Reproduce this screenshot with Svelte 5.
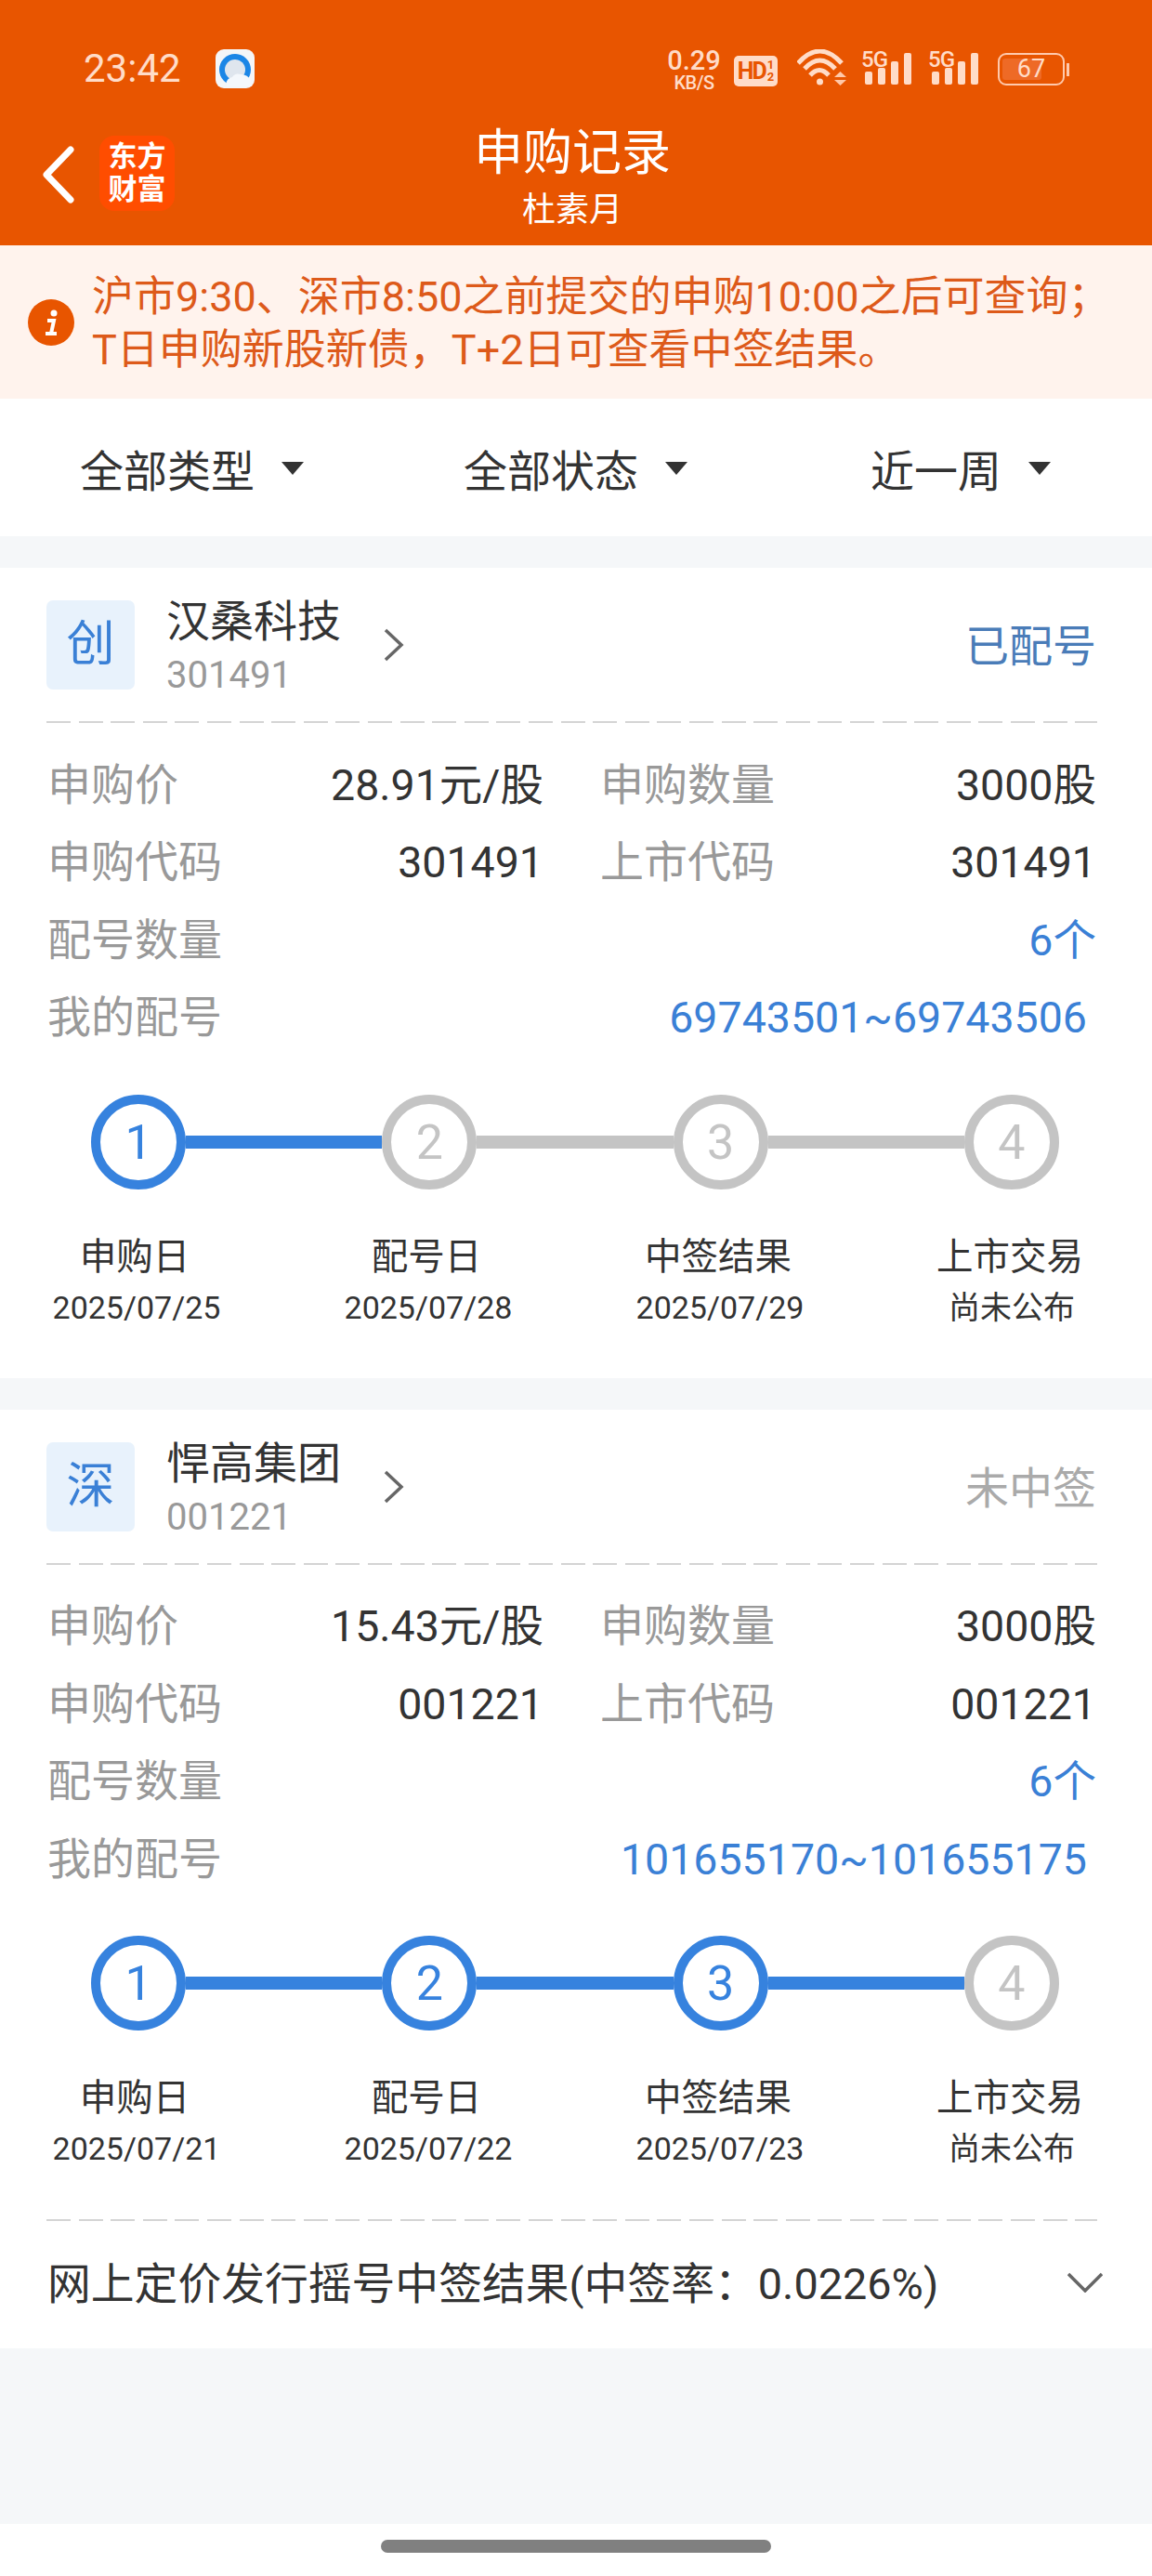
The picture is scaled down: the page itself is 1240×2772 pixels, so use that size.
<script>
  const cards = [
    {
      badge: '创',
      name: '汉桑科技',
      code: '301491',
      status: '已配号',
      statusClass: 'matched',
      price: '28.91元/股',
      numbers: '69743501~69743506',
      done: 1,
      steps: [
        { label: '申购日', date: '2025/07/25' },
        { label: '配号日', date: '2025/07/28' },
        { label: '中签结果', date: '2025/07/29' },
        { label: '上市交易', date: '尚未公布' }
      ]
    },
    {
      badge: '深',
      name: '悍高集团',
      code: '001221',
      status: '未中签',
      statusClass: 'missed',
      price: '15.43元/股',
      numbers: '101655170~101655175',
      done: 3,
      steps: [
        { label: '申购日', date: '2025/07/21' },
        { label: '配号日', date: '2025/07/22' },
        { label: '中签结果', date: '2025/07/23' },
        { label: '上市交易', date: '尚未公布' }
      ],
      footer: '网上定价发行摇号中签结果(中签率：0.0226%)'
    }
  ]

  const filters = ['全部类型', '全部状态', '近一周']
</script>

<div class="page">
  <header>
    <div class="statusbar">
      <span class="time">23:42</span>
      <svg class="qq" width="42" height="42" viewBox="0 0 42 42">
        <rect width="42" height="42" rx="9" fill="#f4f6f8" />
        <circle cx="21" cy="22" r="17" fill="#1b86e6" />
        <circle cx="21" cy="22" r="11" fill="#dfe6ee" />
        <path d="M12 40q-2-8 6-10q3-5 9-3q8 0 11 7v6z" fill="#f4f8fc" />
      </svg>
      <span class="spacer"></span>
      <span class="speed"><b>0.29</b><i>KB/S</i></span>
      <span class="hd">HD<small>1<br />2</small></span>
      <svg class="wifi" width="54" height="40" viewBox="0 0 54 40">
        <path d="M1 15q23.500-26 47 0M8 21q16.500-18 33 0M14 28q10-11 20 0" fill="none" stroke="#ffdcc8" stroke-width="5" />
        <circle cx="24.500" cy="35" r="3.500" fill="#ffdcc8" />
        <path d="M40 30l6.500-6l6.500 6zM40 33l6.500 6l6.500-6z" fill="#ffc8a8" />
      </svg>
      {#each [0, 1] as s}
        <span class="signal">
          <span class="fiveg">5G</span>
          <i class="b1"></i><i class="b2"></i><i class="b3"></i><i class="b4"></i>
        </span>
      {/each}
      <span class="battery">
        <span class="level"></span>
        <span class="pct">67</span>
      </span>
      <span class="nub"></span>
    </div>
    <div class="nav">
      <svg class="back" width="36" height="62" viewBox="0 0 36 62">
        <path d="M31 4L5 31l26 27" fill="none" stroke="#fff" stroke-width="7" stroke-linecap="round" stroke-linejoin="round" />
      </svg>
      <div class="logo">东方<br />财富</div>
      <div class="title">
        <div class="main">申购记录</div>
        <div class="sub">杜素月</div>
      </div>
    </div>
  </header>

  <div class="notice">
    <svg class="info" width="50" height="50" viewBox="0 0 50 50">
      <circle cx="25" cy="25" r="25" fill="#e85500" />
      <circle cx="28" cy="15" r="3.500" fill="#fff" />
      <path d="M21 23h7l-3 14M19 37h12" fill="none" stroke="#fff" stroke-width="4" />
    </svg>
    <p>沪市9:30、深市8:50之前提交的申购10:00之后可查询；<br />T日申购新股新债，T+2日可查看中签结果。</p>
  </div>

  <div class="filters">
    {#each filters as f}
      <div class="filter">{f}<span class="caret"></span></div>
    {/each}
  </div>

  {#each cards as card}
    <section class="card">
      <div class="head">
        <div class="badge">{card.badge}</div>
        <div class="names">
          <div class="name">{card.name}</div>
          <div class="code">{card.code}</div>
        </div>
        <svg class="arrow" width="22" height="36" viewBox="0 0 22 36">
          <path d="M2 2l17 16L2 34" fill="none" stroke="#666" stroke-width="3.5" />
        </svg>
        <div class="status {card.statusClass}">{card.status}</div>
      </div>
      <div class="dash"></div>
      <div class="rows">
        <div class="row half">
          <div class="pair"><span class="label">申购价</span><span class="value">{card.price}</span></div>
          <div class="pair"><span class="label">申购数量</span><span class="value">3000股</span></div>
        </div>
        <div class="row half">
          <div class="pair"><span class="label">申购代码</span><span class="value">{card.code}</span></div>
          <div class="pair"><span class="label">上市代码</span><span class="value">{card.code}</span></div>
        </div>
        <div class="row">
          <span class="label">配号数量</span><span class="value blue">6个</span>
        </div>
        <div class="row">
          <span class="label">我的配号</span><span class="value blue nums">{card.numbers}</span>
        </div>
      </div>
      <div class="track">
        {#each card.steps as step, i}
          <div class="dot" class:on={i < card.done}>{i + 1}</div>
          {#if i < 3}
            <div class="line" class:on={i < card.done}></div>
          {/if}
        {/each}
      </div>
      <div class="labels">
        {#each card.steps as step}
          <div class="step">
            <div class="step-label">{step.label}</div>
            <div class="step-date">{step.date}</div>
          </div>
        {/each}
      </div>
      {#if card.footer}
        <div class="dash"></div>
        <div class="footer">
          <span>{card.footer}</span>
          <svg width="38" height="22" viewBox="0 0 38 22">
            <path d="M1 2l18 18L37 2" fill="none" stroke="#666" stroke-width="3.5" />
          </svg>
        </div>
      {/if}
    </section>
  {/each}

  <div class="rest"></div>
  <div class="home"><span></span></div>
</div>

<style>
  :global(body) {
    margin: 0;
    background: #fff;
  }

  .page {
    width: 1240px;
    height: 2772px;
    overflow: hidden;
    background: #f5f7f9;
    font-family: Roboto, 'Noto Sans CJK SC', sans-serif;
    color: #333;
  }

  header {
    height: 264px;
    background: #e85500;
    color: #fff;
  }

  .statusbar {
    height: 146px;
    box-sizing: border-box;
    padding: 53px 89px 0 90px;
    display: flex;
    align-items: flex-start;
    color: #ffdcc8;
  }

  .time {
    font-size: 42px;
    line-height: 42px;
    margin-right: 37px;
  }

  .spacer {
    flex: 1;
  }

  .speed {
    display: flex;
    flex-direction: column;
    align-items: center;
    width: 56px;
    margin-right: 15px;
  }

  .speed b {
    font-size: 29px;
    line-height: 24px;
    font-weight: 500;
  }

  .speed i {
    font-size: 20px;
    line-height: 18px;
    margin-top: 3px;
    font-style: normal;
    font-weight: 500;
    letter-spacing: -0.5px;
  }

  .hd {
    width: 47px;
    height: 33px;
    margin: 7px 21px 0 0;
    border-radius: 5px;
    background: #ffdcc8;
    color: #e85500;
    font-size: 25px;
    font-weight: 700;
    line-height: 33px;
    letter-spacing: -2px;
    display: flex;
    justify-content: center;
  }

  .hd small {
    font-size: 13px;
    line-height: 13px;
    letter-spacing: 0;
    margin-left: 2px;
    padding-top: 3px;
    text-align: center;
  }

  .wifi {
    margin-right: 15px;
  }

  .signal {
    width: 56px;
    height: 38px;
    margin-right: 16px;
    box-sizing: border-box;
    padding-left: 4px;
    position: relative;
    display: flex;
    align-items: flex-end;
    gap: 6px;
  }

  .fiveg {
    position: absolute;
    left: 0;
    top: -3px;
    font-size: 24px;
    line-height: 28px;
    font-weight: 500;
    letter-spacing: -1px;
  }

  .signal i {
    width: 8px;
    background: #ffdcc8;
    border-radius: 2px;
    flex: none;
  }

  .b1 {
    height: 14px;
  }

  .b2 {
    height: 18px;
  }

  .b3 {
    height: 25px;
  }

  .b4 {
    height: 34px;
  }

  .battery {
    width: 72px;
    height: 35px;
    margin: 4px 0 0 3px;
    box-sizing: border-box;
    border: 2px solid #ffc9ac;
    border-radius: 9px;
    position: relative;
    font-size: 27px;
    line-height: 31px;
    text-align: center;
  }

  .level {
    position: absolute;
    left: 3px;
    top: 4px;
    width: 42px;
    height: 23px;
    background: #ee6a26;
    border-radius: 3px;
  }

  .pct {
    position: relative;
  }

  .nub {
    width: 3px;
    height: 14px;
    margin: 15px 0 0 2px;
    background: #ffc9ac;
  }

  .nav {
    height: 118px;
    position: relative;
    display: flex;
    align-items: flex-start;
  }

  .back {
    margin: 11px 0 0 45px;
  }

  .logo {
    width: 81px;
    height: 81px;
    margin: 0 0 0 26px;
    border-radius: 16px;
    background: #ff4d00;
    font-size: 31px;
    line-height: 35px;
    font-weight: 700;
    text-align: center;
    padding-top: 5px;
    box-sizing: border-box;
  }

  .title {
    position: absolute;
    left: 0;
    right: 8px;
    top: -11px;
    text-align: center;
  }

  .main {
    font-size: 53px;
    line-height: 60px;
  }

  .sub {
    font-size: 36px;
    line-height: 62px;
  }

  .notice {
    height: 165px;
    box-sizing: border-box;
    padding: 0 0 0 30px;
    background: #fff3ed;
    display: flex;
    align-items: center;
    color: #dd5a1a;
  }

  .info {
    margin: 0 19px 0 0;
    flex: none;
  }

  .notice p {
    margin: 2px 0 0;
    font-size: 45px;
    line-height: 57px;
    white-space: nowrap;
  }

  .filters {
    height: 148px;
    background: #fff;
    display: flex;
    align-items: center;
    font-size: 47px;
    padding-left: 86px;
  }

  .filter {
    display: flex;
    align-items: center;
  }

  .filter:nth-child(1) {
    width: 413px;
  }

  .filter:nth-child(2) {
    width: 438px;
  }

  .caret {
    margin: 2px 0 0 29px;
    border-left: 12px solid transparent;
    border-right: 12px solid transparent;
    border-top: 14px solid #333;
  }

  .card {
    margin-top: 34px;
    background: #fff;
  }

  .head {
    height: 165px;
    box-sizing: border-box;
    padding: 35px 60px 0 50px;
    display: flex;
    align-items: flex-start;
  }

  .badge {
    width: 95px;
    height: 96px;
    background: #e8f2fc;
    border-radius: 7px;
    color: #3a80d6;
    font-size: 52px;
    line-height: 96px;
    text-align: center;
    flex: none;
  }

  .names {
    margin-left: 34px;
  }

  .name {
    font-size: 47px;
    line-height: 54px;
    margin-top: -4px;
  }

  .code {
    font-size: 40px;
    line-height: 46px;
    margin-top: 8px;
    color: #999;
  }

  .arrow {
    margin: 30px 0 0 46px;
  }

  .status {
    margin: 23px 0 0 auto;
    font-size: 47px;
    line-height: 54px;
  }

  .matched {
    color: #4a7cb8;
  }

  .missed {
    color: #aaa;
  }

  .dash {
    height: 2px;
    margin: 0 59px 0 50px;
    background: repeating-linear-gradient(to right, #d4d4d4 0 26px, transparent 26px 34.600px);
  }

  .rows {
    padding: 25px 60px 0 51px;
  }

  .row {
    height: 83.500px;
    display: flex;
    align-items: center;
    justify-content: space-between;
  }

  .half {
    gap: 61px;
  }

  .pair {
    flex: 1;
    display: flex;
    align-items: center;
    justify-content: space-between;
  }

  .label,
  .value {
    display: block;
    line-height: 56px;
  }

  .label {
    color: #999;
    font-size: 47px;
  }

  .value {
    font-size: 46.500px;
  }

  .blue {
    color: #3a80d6;
  }

  .nums {
    margin-right: 10px;
  }

  .track {
    display: flex;
    align-items: center;
    padding: 40.500px 100px 0 98px;
  }

  .dot {
    width: 102px;
    height: 102px;
    box-sizing: border-box;
    border: 10px solid #c4c4c4;
    border-radius: 50%;
    color: #c4c4c4;
    font-size: 52px;
    line-height: 84px;
    text-align: center;
    flex: none;
  }

  .dot.on {
    border-color: #3682de;
    color: #3682de;
  }

  .line {
    flex: 1;
    height: 14px;
    background: #c4c4c4;
  }

  .line.on {
    background: #3682de;
  }

  .labels {
    display: flex;
    padding: 49px 0 0 37px;
    gap: 94px;
  }

  .step {
    width: 220px;
    text-align: center;
    white-space: nowrap;
  }

  .step-label {
    font-size: 39.500px;
    line-height: 48px;
    margin-left: -4px;
  }

  .step-date {
    font-size: 34px;
    line-height: 46px;
    margin-top: 7px;
    margin-bottom: 53px;
  }

  .footer {
    height: 137px;
    box-sizing: border-box;
    padding: 0 53px 10px 51px;
    display: flex;
    align-items: center;
    justify-content: space-between;
    font-size: 46.800px;
  }

  .footer svg {
    margin-top: 4px;
  }

  .rest {
    height: 189px;
  }

  .home {
    height: 56px;
    box-sizing: border-box;
    background: #fff;
    display: flex;
    justify-content: center;
    padding-top: 17px;
  }

  .home span {
    width: 420px;
    height: 14px;
    border-radius: 7px;
    background: #808080;
  }
</style>
